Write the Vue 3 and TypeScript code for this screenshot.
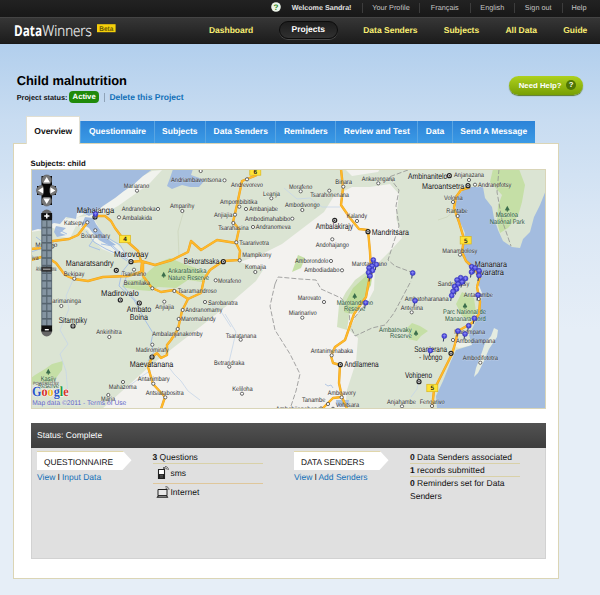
<script setup lang="ts">
type Label = [text: string, x: number, y: number, width: number]
type Point = [x: number, y: number]

const account = [
  { text: 'Your Profile', cls: 'w57' },
  { text: 'Français', cls: 'w51' },
  { text: 'English', cls: 'w44' },
  { text: 'Sign out', cls: 'w48' },
  { text: 'Help', cls: 'w34' },
]
const nav = ['Dashboard', 'Projects', 'Data Senders', 'Subjects', 'All Data', 'Guide']
const tabs = ['Overview', 'Questionnaire', 'Subjects', 'Data Senders', 'Reminders', 'Review and Test', 'Data', 'Send A Message']

const villages: Label[] = [
  ['Mariarano', 123.7, 187.8, 25.6], ['Andranoboka', 121.7, 211.2, 34], ['Amparihy', 170, 208.3, 24.3],
  ['Andriambavontsona', 171, 182.3, 50.3], ['Ambalakida', 122.3, 219.5, 29.7], ['Katsepy', 64, 224.7, 20],
  ['Boanamary', 81, 237.5, 29], ['Bekipay', 63.7, 275.5, 20.6], ['Tsararano', 121.7, 276.3, 24.3],
  ['Beamilaka', 123.7, 285.3, 26.3], ['Mitsinjo', 35.3, 247.4, 22], ['iva', 31.5, 260.3, 7],
  ['Ankazomborona', 36, 271.3, 20.3], ['Andrevorevo', 231, 186.5, 32], ['Leanja', 263, 195.6, 17],
  ['Morafeno', 289, 188.6, 23.3], ['Tsarahonenana', 310.3, 197.3, 38.7], ['Binara', 335.3, 184.4, 16.7],
  ['Ankarongana', 361.7, 180.8, 33.3], ['Ampombibitika', 220, 203.5, 37.3], ['Ambanjabe', 249.3, 211.2, 28.7],
  ['Ambodivongo', 285, 207.2, 34.7], ['Anjiajia', 214, 216.7, 18.3], ['Ambodimahabibo', 245, 220.7, 45.3],
  ['Tsarahasina', 218.3, 229.6, 30.4], ['Andranomeva', 255.7, 229.2, 35], ['Tsararivotra', 239.3, 244.7, 29.7],
  ['Kalandy', 346.7, 218.4, 20.3], ['Andohajango', 315.7, 246.5, 33.3], ['Mampikony', 242.3, 257.2, 29],
  ['Komajia', 245, 269.2, 21], ['Amborondolo', 295, 263.2, 33.3], ['Ambodiadabo', 304.3, 272.4, 35],
  ['Marotandrano', 351.7, 266.2, 35.3], ['Morafeno', 218, 282.5, 23], ['Anjanazana', 454, 177.2, 30],
  ['Andranofotsy', 478, 186.8, 33.3], ['Voloina', 444, 199.5, 18.7], ['Rantabe', 446.3, 213.3, 21.4],
  ['Manambolosy', 442.3, 252.6, 35], ['Sandrakatsy', 437.7, 286, 31.6], ['Anjiajia', 155.3, 308.6, 18.7],
  ['Tsaramandroso', 177.7, 293.2, 39], ['arimaninga', 52.3, 303.4, 28.7], ['Ankirihitra', 96.3, 334.2, 25.4],
  ['Andranomamy', 185.3, 312.2, 37], ['Maromalandy', 181, 321.2, 34.7], ['Ambalanjanakomby', 152.3, 335.8, 50.2],
  ['Madiromirafy', 135.7, 351.6, 33], ['Antanimbary', 137.7, 381.2, 32], ['Antsiatabositra', 145.7, 394.5, 38],
  ['Mahazoma', 108.7, 389.2, 28], ['Maria', 101, 401.3, 14], ['Sarobaratra', 208, 304.6, 29.7],
  ['Marovato', 297.7, 299.8, 23.3], ['Miarinarivo', 288.7, 315.3, 28], ['Tsaratanana', 225.7, 337.8, 30.6],
  ['Betrandraka', 214, 364.5, 30.3], ['Keliloha', 232.3, 390.6, 20.4], ['Antanimenabaka', 310.7, 353.2, 42.3],
  ['Amboavory', 327.7, 394.9, 28], ['Tanambe', 302, 401.5, 23.3], ['Vohitsara', 335.7, 406.8, 23.3],
  ['Ambohijanahary', 275.7, 410.6, 43.3], ['Antanambe', 463.7, 297, 29.3], ['Ambatoharanana', 404.7, 301.2, 44],
  ['Antenina', 400.7, 310.2, 22.3], ['Manompana', 454.3, 334.3, 30.7], ['Ambodiampana', 456, 342.6, 39.3],
  ['Ambodifototra', 462.7, 360.2, 35.3], ['Anjahambe', 387, 404.2, 29], ['Fenoarivo', 419.7, 403.8, 25],
]
const towns: Label[] = [
  ['Mahajanga', 76.7, 213, 37.6], ['Marovoay', 114, 257.4, 34.3], ['Manaratsandry', 65.7, 266.4, 48],
  ['Bekoratsaka', 183.7, 264, 35.6], ['Ambalakirajy', 315.7, 229.2, 37.3], ['Mandritsara', 371.7, 234.5, 37.3],
  ['Ambinanitelo', 408, 178.6, 39.3], ['Maroantsetra', 422, 188.6, 42.3], ['Mananara', 474.7, 266.8, 32.3],
  ['Avaratra', 476, 275.2, 28], ['Madirovalo', 101, 295.8, 37.7], ['Ambato', 126.7, 311.8, 24.6],
  ['Boina', 129.7, 319.6, 18.3], ['Sitampiky', 58.7, 323.2, 28.3], ['Maevatanana', 129.7, 366.8, 43.6],
  ['Andilamena', 344.3, 367.3, 34.4], ['Soanierana', 414.3, 352.4, 32.7], ['- Ivongo', 419, 360, 23.3],
  ['Vohipeno', 405, 378.3, 27],
]
const parks: Label[] = [
  ['Ankarafantsika', 168, 272.8, 38.5], ['Nature Reserve', 168, 280, 41], ['Masoloa', 495.7, 217.2, 22.3],
  ['National Park', 489.7, 224, 35], ['Kasijy', 40.7, 380.8, 15.6], ['Reserve', 38, 387.5, 21],
  ['Marotandrano', 336.7, 304.8, 36.3], ['Reserve', 344, 311.2, 21.3], ['Parc National de', 443, 314.3, 43],
  ['Mananara Nord', 445, 321, 40.7], ['Ambatovaky', 379, 332, 32.7], ['Reserve', 390, 338.3, 21.7],
]
const dots: Point[] = [
  [158, 209], [182.3, 211], [224.5, 180.3], [137, 190.7], [200.7, 171], [119, 217.3], [87.3, 222.3], [95.3, 230.3],
  [74.3, 278.7], [134, 269.7], [152.3, 288.3], [52.7, 246.3], [247, 179.3], [271.3, 198.3], [300.7, 191.3],
  [329.3, 190.7], [343.3, 186.7], [378.3, 183.3], [239.3, 206.7], [246, 209], [302.3, 210], [235, 214.7],
  [292.3, 218.7], [233.3, 223], [253, 227], [236.3, 242.3], [357, 221], [332.3, 239.3], [239.7, 260.3],
  [255.3, 272], [331, 261], [342, 270.3], [215.7, 280.3], [469, 180], [475, 184.7], [453, 202], [457.7, 216],
  [460, 254.7], [164.3, 301.7], [174.3, 291], [61.3, 306], [109.3, 337], [182.7, 310], [178.7, 319], [177.7, 329],
  [152.3, 344.7], [153.3, 383.7], [165.3, 397.3], [123, 382], [108.3, 395], [205, 302], [324, 302], [302.3, 317.7],
  [240.7, 339.7], [229.3, 366.7], [242, 393.7], [331.7, 355.3], [341.7, 397.3], [328, 404], [321, 408.5],
  [333, 408.8], [478.7, 299], [411.7, 312.3], [453, 340], [480.3, 362.7], [402, 406.3], [432, 406],
]
const hubs: Point[] = [
  [95, 217], [131, 261.7], [116.3, 270.3], [223.3, 261.7], [334.7, 220.3], [368, 231.7], [449.3, 175.7],
  [468, 185.7], [120.3, 300], [139.3, 303], [73, 326], [152, 357], [340.3, 364.7], [451, 353.3], [419, 381.7],
]
const trees: Point[] = [[163.7, 274.7], [507.3, 208.7], [48.3, 371.7], [354.7, 296], [465, 305.7], [416, 333]]
const pins: Point[] = [
  [95.5, 214], [373.3, 260], [376.3, 264.5], [372, 266], [369, 268], [372.5, 270.5], [368.5, 272.5], [370, 276],
  [365.7, 302.7], [412.7, 273], [471.7, 266.7], [475, 268], [471.5, 272], [479, 270.7], [479, 275.5], [460.7, 277.7],
  [465.5, 278.5], [457, 280], [462, 282], [458, 284], [454.5, 286.5], [456.5, 289], [453, 291.5], [451.7, 295.5],
  [415, 300.7], [478, 295], [474.3, 318.3], [468.7, 325.7], [458, 331], [465, 334], [444.3, 336], [430.3, 350.5],
]
const shields = [
  { n: '4', x: 125, y: 239 }, { n: '6', x: 255.3, y: 171.5 }, { n: '5', x: 465.7, y: 240.3 }, { n: '5', x: 432.3, y: 388 },
]
const notches = Array.from({ length: 14 }, (_, i) => 220 + i * 7.6)
</script>

<template>
  <div class="page">
    <header>
      <div class="topbar">
        <svg class="help-dot" viewBox="0 0 10 10"><circle cx="5" cy="5" r="4.8" fill="#eef5ea" /><text x="5" y="7.8" text-anchor="middle">?</text></svg>
        <strong>Welcome Sandra!</strong>
        <a v-for="a in account" :key="a.text" :class="a.cls">{{ a.text }}</a>
      </div>
      <div class="mainbar">
        <svg class="logo" viewBox="0 -2 104 24">
          <text class="logo-b" x="0" y="15.2" textLength="28" lengthAdjust="spacingAndGlyphs">Data</text>
          <text class="logo-l" x="28.3" y="15.2" textLength="49.5" lengthAdjust="spacingAndGlyphs">Winners</text>
          <rect x="83" y="3.2" width="18.6" height="8" fill="#f5cf0a" />
          <text class="logo-beta" x="85.3" y="9.6" textLength="14" lengthAdjust="spacingAndGlyphs">Beta</text>
        </svg>
        <nav>
          <a v-for="n in nav" :key="n" :class="{ current: n === 'Projects' }">{{ n }}</a>
        </nav>
      </div>
    </header>

    <section class="heading">
      <div>
        <h1>Child malnutrition</h1>
        <div class="status-line">
          <b>Project status:</b><span class="active">Active</span><i></i><a>Delete this Project</a>
        </div>
      </div>
      <button class="need">Need Help?<span>?</span></button>
    </section>

    <div class="tabs">
      <a v-for="(t, i) in tabs" :key="t" :class="{ on: i === 0 }">{{ t }}</a>
    </div>

    <main class="panel">
      <div class="subjects">Subjects: child</div>
      <svg class="map" viewBox="31 169 515 240">
        <rect x="31" y="169" width="515" height="240" fill="#dbe4d3" />
        <!-- dry inland region -->
        <path fill="#f3f2ef" d="M352 187 334 196 324 212 303 228 282 244 262 254 240 262 263 270 256 281 234 300 200 327 178 344 150 366 102 409H345L347 390 356 362 358 338 349 330 358 312 366 305 374 290 375 266 392 249 402 238 396 218 399 194 390 184 370 187Z" />
        <path fill="#f3f2ef" d="M345 169H380L378 172 352 176Z" />
        <!-- nature reserves -->
        <g fill="#c5dfa6">
          <path d="M493 169H519L525 185 522 202 518 216 508 228 500 233 497 222 498 206 502 195 490 182Z" />
          <path d="M149 271 160 262 170 258 184 264 196 268 207 276 202 282 188 280 176 288 158 287 150 291 138 290 122 287 128 280 140 280Z" />
          <path d="M35 375 45 369 52 364 63 361 62 370 56 378 49 384 38 382 31 385V378Z" />
          <path d="M292 272 298 255 305 258 301 268Z" />
          <path d="M456 304 462 292 474 298 476 312 470 320 462 316Z" />
          <path d="M404 331 412 323 420 326 428 331 421 336 417 341 408 339 411 334Z" />
        </g>
        <path fill="#d3e2c2" d="M337 327 339 305 346 292 355 280 366 272 371 276 356 296 350 310 347 330Z" />
        <path fill="#bfdc9b" d="M345 303 353 288 366 276 373 270 371 285 362 302 352 314 344 312Z" />
        <!-- sandy shallows -->
        <path fill="#f1f3ee" d="M152 171 162 170 150 183 135 194 118 206 105 213 95 212 93 219 84 214 74 219 67 216 63 226 56 229 47 226 44 230 31 232V226L75 212Z" />
        <path fill="#eef1ea" d="M57 226 65 219 80 217 92 215 98 226 104 237 117 244 128 255 137 261 128 259 114 254 102 249 92 239 88 230 76 226 70 238 57 236Z" />
        <path fill="#eef1ea" d="M470 189 463 190 455 199 459 205 462 198ZM453 346 459 339 467 341 473 345 459 348ZM475 286 482 285 484 294 478 292Z" />
        <!-- sea -->
        <g fill="#a3bcdf">
          <path d="M31 169H152.7L143 176 133 185 124 191 115 198 103 206 93 214 89 216 83 213 77 213 76 219 66 217 60 224 54 223 47 226 44 230 38 229 31 231Z" />
          <path d="M85 217 93 218 96 224 105 237 116 245 110 246 99 240 92 232 89 228 82 224Z" />
          <path d="M56 226 66 228 60 233 66 235 57 237 54 232Z" />
          <path d="M173 169H193L191 175 205 180 199 187 190 187 182 185 172 189 167 186 170 178Z" />
          <path d="M470 187 483 187 485 198 492 207 494 218 498 230 503 241 512 247 520 248 523 239 530 232 534 217 540 205 546 190V409H437L436 396 443 381 451 361 456 350 472 345 469 335 474 325 480 310 482 293 478 283 477 275 467 264 461 254 465 233 457 215 455 200 463 190Z" />
        </g>
        <path fill="#e5ece1" d="M494 328 498 330 497 337 489 349 484 361 478 373 474 377 476 368 482 352 485 343 491 336Z" />
        <!-- rivers -->
        <g fill="none" stroke="#a7c1e6" stroke-width="1">
          <path d="M91 229 101 238 111 246 120 254 130 261M86 231 94 242 106 249 117 254 127 261M99 232 113 241 120 245 128 258M101 244 113 246 124 256" />
          <path d="M130 262 122 272 119 286 134 300 145 320 153 333 151 343 154 352 148 361M128 272 123 286 137 302M97 234 89 246 100 250" />
          <path d="M36 237 44 243 51 240M31 252 43 248M55 228 67 234" />
        </g>
        <g fill="none" stroke="#c5d5e8" stroke-width=".8">
          <path d="M73 280 66 296 69 309 60 330 68 344 60 354 66 371 68 395M168 366 174 374 181 381 188 391 200 400M225 314 236 332 233 345 229 362M284 188 297 199 310 198 322 207 340 207M208 303 220 310 231 327M125 389 141 377 151 370M420 373 417 389 411 397" />
          <path stroke="#cdd6bd" d="M184 210 178 231 179 257M438 220 447 217 454 211" />
          <path stroke="#a3bcdf" d="M325 384 328 386 331 385 333 388" />
        </g>
        <!-- district borders -->
        <g fill="none" stroke="#8f8f8f" stroke-width=".8" stroke-dasharray="5 2">
          <path d="M275 284 278 277 300 279 316 280 321 289 341 298 349 308 350 325 355 336 372 328 385 325 394 313 402 298 411 281M275 284 270 306 275 330 290 354 300 374 296 391 290 409" />
          <path d="M408 170 389 177 399 190 396 206 399 226 388 260 395 266 411 272M499 169 497 192 502 220 511 246M366 303 352 321" />
        </g>
        <!-- lakes -->
        <path fill="#a9c2df" d="M336 400 349 400 348 407 337 406Z" />
        <!-- highways -->
        <g class="road-edge"><path id="roads" d="M95 216 105 216 111 221 115 228 121 236 129 243 138 251 141 261 130 262M141 261 155 265 172 260 188 252 191 241 201 250 217 240 236 243M31 249 41 248M87 223 78 235 69 239 53 241 41 245M31 260 45 256 56 263 65 275 74 279 88 281 103 277 128 276 141 272 142 262M143 262 143 276 152 288 161 292 174 290 188 299 201 293 204 279 210 270 223 261 239 260 240 251 236 243 239 229 233 222 237 205 242 181 247 179 257 175M188 299 182 311 178 329 171 340 167 345 167 355 161 358 157 353 152 357 148 367 153 384 165 397 161 409M341 169 343 188 341 205 350 218 359 229 368 230 370 252 371 270 366 297 354 314 345 340 335 347 331 356 333 363 340 365 339 383 342 397 333 398 322 409M342 397 347 409M470 187 461 190 456 197 454 208 459 222 464 239 462 252 466 261 474 268 480 276 477 287 480 302 479 314 472 323 458 331 455 344 452 354 442 374 434 390 432 409" /></g>
        <use href="#roads" class="road" />

        <g v-for="(s, i) in shields" :key="'s' + i">
          <rect :x="s.x - 5.5" :y="s.y - 3.7" width="11" height="7.4" fill="#ffe436" stroke="#d9b51f" stroke-width=".7" />
          <text class="shield" :x="s.x" :y="s.y + 2.3" text-anchor="middle">{{ s.n }}</text>
        </g>
        <circle v-for="(d, i) in dots" :key="'d' + i" :cx="d[0]" :cy="d[1]" r="1.6" fill="#fff" stroke="#555" stroke-width=".9" />
        <g v-for="(d, i) in hubs" :key="'h' + i">
          <circle :cx="d[0]" :cy="d[1]" r="2" fill="#fff" stroke="#222" stroke-width="1.2" /><circle :cx="d[0]" :cy="d[1]" r=".8" fill="#222" />
        </g>
        <path v-for="(d, i) in trees" :key="'t' + i" :transform="`translate(${d[0]} ${d[1]})`" fill="#3c6e4c" d="M0-3 2.2 1 1.8 1.8H.5V3H-.5V1.8H-1.8L-2.2 1Z" />
        <text v-for="(l, i) in villages" :key="'v' + i" class="village" :x="l[1]" :y="l[2]" :textLength="l[3]" lengthAdjust="spacingAndGlyphs">{{ l[0] }}</text>
        <text v-for="(l, i) in parks" :key="'p' + i" class="park" :x="l[1]" :y="l[2]" :textLength="l[3]" lengthAdjust="spacingAndGlyphs">{{ l[0] }}</text>
        <text v-for="(l, i) in towns" :key="'w' + i" class="town" :x="l[1]" :y="l[2]" :textLength="l[3]" lengthAdjust="spacingAndGlyphs">{{ l[0] }}</text>

        <g v-for="(p, i) in pins" :key="'n' + i" :transform="`translate(${p[0]} ${p[1]})`">
          <path d="M-.5 2-1 5.5" stroke="#333a66" stroke-width="1" />
          <circle r="2.5" fill="#4a48dc" stroke="#302eae" stroke-width=".5" />
          <path d="M-1.6-.4H1.6M0-1.8V1.5" stroke="#9d9cf5" stroke-width=".6" />
        </g>

        <!-- pan pad -->
        <rect x="41.5" y="176" width="10.5" height="29" fill="#080808" />
        <rect x="37" y="186" width="19" height="9" fill="#080808" />
        <g fill="#777" stroke="#555" stroke-width=".6">
          <circle cx="46.7" cy="180" r="5" /><circle cx="46.7" cy="201" r="5" /><circle cx="41.3" cy="190.4" r="4.8" /><circle cx="52" cy="190.4" r="4.8" />
        </g>
        <path fill="#080808" d="M42.5 184H51L49.5 189V192L51 197H42.5L44 192V189Z" />
        <path fill="#fff" d="M46.7 177 50 182.5H43.4ZM46.7 204 50 198.5H43.4ZM38 190.4 43 187.2V193.6ZM55.4 190.4 50.4 187.2V193.6Z" />
        <!-- zoom slider -->
        <path fill="#666" d="M41.3 218V215a5.4 5.4 0 0 1 10.8 0V218Z" />
        <rect x="41.3" y="213" width="10.8" height="7" fill="#111" />
        <path stroke="#fff" stroke-width="1.5" d="M44.2 216H49.4M46.8 213.4V218.6" />
        <rect x="41.3" y="220" width="10.8" height="106" fill="#56646f" />
        <g v-for="y in notches" :key="y" fill="#8494a1"><rect x="42.3" :y="y + .8" width="3.9" height="6" /><rect x="47.4" :y="y + .8" width="3.9" height="6" /></g>
        <path fill="#666" d="M41.3 329V331a5.4 5.4 0 0 0 10.8 0V329Z" />
        <rect x="41.3" y="325.5" width="10.8" height="6" fill="#111" />
        <path stroke="#fff" stroke-width="1.4" d="M44.8 329.7H48.8" />
        <rect x="41.3" y="266.7" width="10.8" height="5" rx="1" fill="#333" /><path stroke="#bbb" d="M43 269.2H50.5" />

        <text class="powered" x="33" y="384.9" textLength="26" lengthAdjust="spacingAndGlyphs">POWERED BY</text>
        <text class="google" x="32" y="396" textLength="36.6" lengthAdjust="spacingAndGlyphs"><tspan fill="#2a56c6">G</tspan><tspan fill="#d62f28">o</tspan><tspan fill="#eebb1d">o</tspan><tspan fill="#2a56c6">g</tspan><tspan fill="#1e9a3f">l</tspan><tspan fill="#d62f28">e</tspan></text>
        <text class="terms" x="32.3" y="404.8" textLength="94" lengthAdjust="spacingAndGlyphs">Map data ©2011 - Terms of Use</text>
        <rect x="31.5" y="169.5" width="514" height="239" fill="none" stroke="#d9d5b8" />
      </svg>

      <section class="status">
        <h2>Status: Complete</h2>
        <div class="cols">
          <div class="lead">
            <div class="tag">QUESTIONNAIRE</div>
            <div><a>View</a> l <a>Input Data</a></div>
          </div>
          <div class="facts first">
            <p><b>3</b> Questions</p>
            <p class="channel">
              <svg viewBox="0 0 14 15"><path d="M1.5 4.5h6v9h-6z" fill="#fff" stroke="#222" stroke-width="1.1" /><path d="M2 9h5v4.5H2zM6.4 2h1.2v3H6.4z" fill="#222" /><path d="M3 10.3h3M3 12h3" stroke="#888" stroke-width=".6" /><path d="M8 1.5c2 0 3.3 1.2 3.5 3.3M8 3c1.2 0 2 .8 2.2 1.8" fill="none" stroke="#444" stroke-width=".8" /></svg>sms
            </p>
            <p class="channel net">
              <svg viewBox="0 0 14 15"><path d="M2 4.5h9v6H2z" fill="#e8e8e8" stroke="#222" /><path d="M1.8 10.5h9.4l1.2 2.2H.4z" fill="#222" /><path d="M2.5 11.4h8" stroke="#ccc" stroke-width=".6" /><path d="M9.5 1.5c2 0 3.3 1.2 3.5 3.3M9.5 3c1.2 0 2 .8 2.2 1.8" fill="none" stroke="#444" stroke-width=".8" /></svg>Internet
            </p>
          </div>
          <div class="lead">
            <div class="tag">DATA SENDERS</div>
            <div><a>View</a> l <a>Add Senders</a></div>
          </div>
          <div class="facts">
            <p><b>0</b> Data Senders associated</p>
            <p><b>1</b> records submitted</p>
            <p class="last"><b>0</b> Reminders set for Data Senders</p>
          </div>
        </div>
      </section>
    </main>
  </div>
</template>

<style>
body { margin: 0; background: #e6eef7; overflow: hidden; }
</style>

<style scoped>
.page { box-sizing: border-box; width: 600px; height: 595px; overflow: hidden; font-family: "Liberation Sans", Arial, sans-serif; font-size: 8.5px; color: #111; text-rendering: geometricPrecision; background: linear-gradient(#b2cfed 44px, #c8dcf1 120px, #dce8f5 230px, #e6eef7 330px); }
.topbar { display: flex; align-items: center; justify-content: flex-end; height: 17px; padding-right: 4.5px; background: linear-gradient(#222, #181818); color: #c4c4c4; font-size: 7.3px; line-height: 16px; }
.topbar strong { margin: -2px 10.5px 0 11px; color: #e2e2e2; font-size: 7.15px; }
.topbar a { box-sizing: border-box; height: 10px; margin-top: -1px; line-height: 10px; border-left: 1px solid #3c3c3c; text-align: center; }
.w57 { width: 57px; }
.w51 { width: 50.5px; }
.w44 { width: 44.5px; }
.w48 { width: 47.5px; }
.w34 { width: 34px; }
.help-dot { width: 10px; height: 10px; margin-top: -3px; }
.help-dot text { font-size: 8px; font-weight: bold; fill: #2a8d22; }
.mainbar { box-sizing: border-box; display: flex; align-items: center; justify-content: space-between; height: 27px; padding: 0 12.7px 0 13.7px; background: linear-gradient(#363636, #1c1c1c); border-top: 1px solid #444; border-bottom: 1px solid #181818; }
.logo { width: 104px; height: 24px; margin-top: 1px; overflow: visible; }
.logo-b { font: bold 15px "Open Sans", sans-serif; fill: #fff; }
.logo-l { font: 300 15px "Open Sans", sans-serif; fill: #f2f2f2; stroke: #f2f2f2; stroke-width: .2px; }
.logo-beta { font: bold 6.8px "Liberation Sans", sans-serif; fill: #6b5a05; }
nav { display: flex; align-items: center; gap: 26.2px; margin-top: -1px; font-weight: bold; color: #f9ee72; }
nav .current { height: 15.5px; line-height: 15.5px; padding: 0 11.5px; border: 1px solid #0c0c0c; border-radius: 9px; background: linear-gradient(#1d1d1d, #303030); color: #fff; box-shadow: 0 1px 0 #484848; margin: 0 -.5px; }
.heading { display: flex; justify-content: space-between; align-items: flex-start; height: 72px; padding: 0 17.3px 0 16.7px; }
h1 { margin: 29px 0 0; font-size: 12.9px; line-height: 16px; color: #000; }
.status-line { display: flex; align-items: center; height: 14px; margin-top: 1px; font-size: 8.5px; color: #1370b8; font-weight: bold; }
.status-line b { font-size: 7.3px; color: #111; }
.active { margin-left: 1.5px; width: 30.5px; height: 12px; border-radius: 4px; background: #1f8a0a; color: #fff; font-size: 7.7px; line-height: 12px; text-align: center; }
.status-line i { width: 1px; height: 9px; margin: 0 4px 0 5px; background: #8fa3b8; }
.status-line a { font-size: 8.5px; }
.need { display: flex; align-items: center; justify-content: space-between; width: 73.5px; height: 19px; margin: 31.5px 0 0; padding: 0 6.5px 0 9.5px; border: 0; border-radius: 10px; background: linear-gradient(#aed11d, #779f04); box-shadow: 0 1px 1px #5c7a2a; color: #fff; font: bold 7.8px "Liberation Sans", sans-serif; }
.need span { width: 10px; height: 10px; border-radius: 50%; background: #4f7504; line-height: 10px; text-align: center; }
.tabs { display: flex; align-items: flex-end; box-sizing: border-box; width: 534.7px; height: 27px; padding-left: 26px; color: #fff; font-size: 8.5px; font-weight: bold; }
.tabs a { box-sizing: border-box; flex: 1 0 auto; height: 22px; line-height: 21px; padding: 0 7px; border-left: 1px solid #5aa5e2; background: linear-gradient(#2c83d8, #3b9ae5); text-align: center; white-space: nowrap; }
.tabs .on { flex: none; height: 28px; margin-bottom: -1px; padding: 0 7.3px; border: 1px solid #e1dfd2; border-bottom: 0; background: #fff; color: #111; line-height: 29px; position: relative; }
.panel { box-sizing: border-box; width: 546px; height: 436px; margin-left: 13px; padding: 13px 12px 0 16.5px; background: #fff; border: 1px solid #dbd5b5; }
.subjects { height: 12px; line-height: 13px; font-weight: bold; font-size: 7.75px; }
.map { display: block; width: 515px; height: 240px; overflow: hidden; }
.map text { font-family: "Liberation Sans", Arial, sans-serif; paint-order: stroke; stroke: rgba(255, 255, 255, .3); stroke-width: .8px; }
.map .village { font-size: 6.7px; fill: #2c2c2c; }
.map .park { font-size: 6.8px; fill: #1d5236; }
.map .town { font-size: 8.3px; fill: #111; }
.map .shield { font-size: 6.3px; font-weight: bold; fill: #222; stroke: none; }
.map .powered { font-size: 4.6px; fill: #444; }
.map .google { font: bold 14px "Liberation Serif", serif; stroke: #fff; }
.map .terms { font-size: 6.8px; fill: #6063c4; }
.road-edge { fill: none; stroke: #eba31f; stroke-width: 2.4px; stroke-linejoin: round; }
.road { fill: none; stroke: #ffb92a; stroke-width: 1.6px; stroke-linejoin: round; }
.status { box-sizing: border-box; width: 515px; height: 135.5px; margin-top: 14px; background: #e0e0e0; border: 1px solid #d2d2d2; border-top: 0; }
h2 { height: 25px; margin: 0 -1px; padding-left: 6.5px; background: linear-gradient(#525252, #3d3d3d); color: #fff; font-size: 8.5px; font-weight: normal; line-height: 25px; }
.cols { display: grid; grid-template-columns: 115.5px 141.5px 116px 110px; padding: 2.5px 0 0 5.5px; }
.lead { line-height: 14px; font-size: 8.5px; }
.lead a { color: #1470b8; }
.tag { box-sizing: border-box; width: 94.5px; height: 19.5px; padding-left: 7px; line-height: 20px; font-size: 8.35px; background: #fff; border-top: 1px solid #e0d6ab; clip-path: polygon(0 0, calc(100% - 9px) 0, 100% 50%, calc(100% - 9px) 100%, 0 100%); }
.facts p { margin: 0; line-height: 12px; height: 12px; border-bottom: 1px solid #d9d1a8; }
.facts.first p { width: 110px; }
.facts .channel { display: flex; height: 20px; padding-left: 4px; box-sizing: border-box; line-height: 18px; border-color: #dfc79b; }
.facts .net { border: 0; padding-left: 3px; line-height: 17px; }
.facts .last { border: 0; height: 26px; line-height: 13px; }
.channel svg { width: 14px; height: 15px; margin-top: 1px; }
.net svg { margin-right: 1px; }
</style>
